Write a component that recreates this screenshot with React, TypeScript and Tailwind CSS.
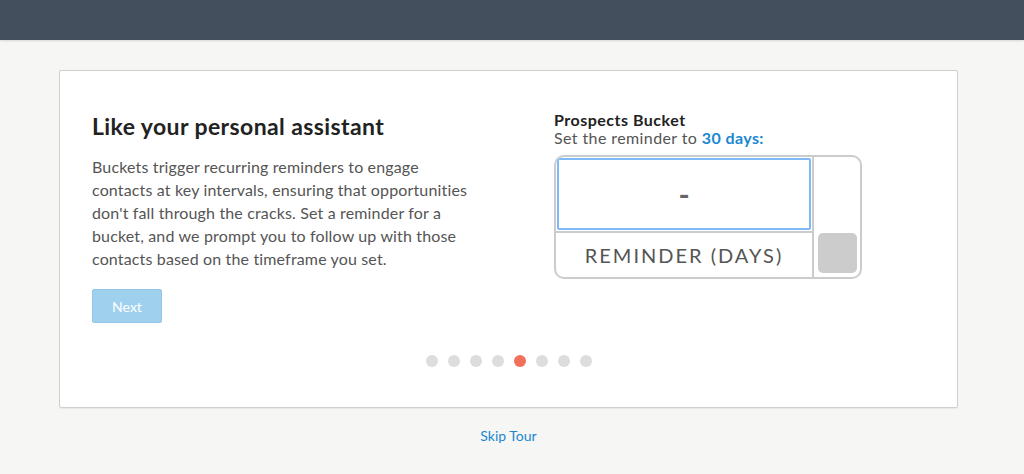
import React from "react";

const dots = [0, 1, 2, 3, 4, 5, 6, 7];

export default function App() {
  const active = 4;
  return (
    <div className="min-h-[474px] bg-[#f6f6f4] font-['Lato',sans-serif]">
      {/* Top bar */}
      <div className="h-[40px] bg-[#434f5c] shadow-[0_1px_2px_rgba(0,0,0,0.12)]" />

      <div className="pl-[59px] pt-[30px]">
        <div className="w-[899px] bg-white border border-[#cfcfcf] rounded-[2px] shadow-[0_1px_1px_rgba(0,0,0,0.06)] pt-[40px] px-[32px] pb-[40px]">
          <div className="flex">
            {/* Copy */}
            <div className="w-[462px] pt-[2px] pr-[82px]">
              <h2 className="text-[23px] leading-[26px] font-bold tracking-[0.4px] text-[#222]">
                Like your personal assistant
              </h2>
              <p className="mt-[16px] text-[16px] leading-[23px] tracking-[0.15px] text-[#555]">
                Buckets trigger recurring reminders to engage contacts at key
                intervals, ensuring that opportunities don't fall through the
                cracks. Set a reminder for a bucket, and we prompt you to follow
                up with those contacts based on the timeframe you set.
              </p>
              <button className="mt-[19px] w-[70px] h-[34px] bg-[#9fd0ee] border border-[#93c7e8] rounded-[2px] text-white text-[14px]">
                Next
              </button>
            </div>

            {/* Demo */}
            <div className="flex flex-col">
              <p className="text-[16px] leading-[18px] font-bold tracking-[0.5px] text-[#222]">
                Prospects Bucket
              </p>
              <p className="text-[16px] leading-[18px] tracking-[0.4px] text-[#555]">
                Set the reminder to{" "}
                <span className="font-bold text-[#1a87d0]">30 days:</span>
              </p>
              <div className="mt-[8px] w-[308px] h-[124px] border-2 border-[#cccccc] rounded-[10px] flex overflow-hidden">
                <div className="w-[256px] flex flex-col">
                  <div className="m-[1px] h-[72px] border-2 border-[#80b9f7] rounded-[2px] flex items-center justify-center text-[30px] font-bold text-[#666]">
                    -
                  </div>
                  <div className="border-t-2 border-[#cccccc] flex-1 flex items-center justify-center text-[20px] tracking-[2px] text-[#555]">
                    REMINDER (DAYS)
                  </div>
                </div>
                <div className="flex-1 border-l-2 border-[#cccccc] flex flex-col justify-end items-center pb-[4px]">
                  <div className="w-[39px] h-[40px] bg-[#cccccc] rounded-[5px]" />
                </div>
              </div>
            </div>
          </div>

          {/* Pager */}
          <div className="mt-[32px] flex justify-center gap-[10px]">
            {dots.map((d) => (
              <span
                key={d}
                className={
                  d === active
                    ? "w-3 h-3 rounded-full bg-[#f2705a]"
                    : "w-3 h-3 rounded-full bg-[#dddddd]"
                }
              />
            ))}
          </div>
        </div>

        <div className="w-[899px] mt-[15px] text-center">
          <a className="text-[14px] leading-[16px] text-[#1a87d0] cursor-pointer">
            Skip Tour
          </a>
        </div>
      </div>
    </div>
  );
}
